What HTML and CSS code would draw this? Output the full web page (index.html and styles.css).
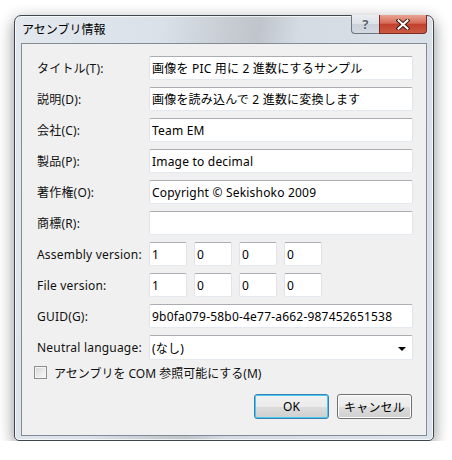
FILE: index.html
```html
<!DOCTYPE html>
<html lang="ja">
<head>
<meta charset="utf-8">
<title>アセンブリ情報</title>
<link rel="stylesheet" href="styles.css">
</head>
<body>
<div class="window">
  <div class="titlebar">
    <span class="title">アセンブリ情報</span>
    <div class="caption-btns">
      <div class="cap help">?</div>
      <div class="cap close">
        <svg width="14" height="11" viewBox="0 0 14 11">
          <path d="M2.5 1.5 L11.5 9.5 M11.5 1.5 L2.5 9.5" stroke="#3a1a14" stroke-width="4" stroke-linecap="square" fill="none"/>
          <path d="M2.5 1.5 L11.5 9.5 M11.5 1.5 L2.5 9.5" stroke="#ffffff" stroke-width="2" stroke-linecap="square" fill="none"/>
        </svg>
      </div>
    </div>
  </div>
  <div class="client">
    <div class="form">
      <div class="lbl">タイトル(T):</div>
      <div class="field">画像を PIC 用に 2 進数にするサンプル</div>
      <div class="lbl">説明(D):</div>
      <div class="field">画像を読み込んで 2 進数に変換します</div>
      <div class="lbl">会社(C):</div>
      <div class="field">Team EM</div>
      <div class="lbl">製品(P):</div>
      <div class="field">Image to decimal</div>
      <div class="lbl">著作権(O):</div>
      <div class="field">Copyright © Sekishoko 2009</div>
      <div class="lbl">商標(R):</div>
      <div class="field"></div>
      <div class="lbl">Assembly version:</div>
      <div class="versions">
        <div class="field ver">1</div>
        <div class="field ver">0</div>
        <div class="field ver">0</div>
        <div class="field ver">0</div>
      </div>
      <div class="lbl">File version:</div>
      <div class="versions">
        <div class="field ver">1</div>
        <div class="field ver">0</div>
        <div class="field ver">0</div>
        <div class="field ver">0</div>
      </div>
      <div class="lbl">GUID(G):</div>
      <div class="field">9b0fa079-58b0-4e77-a662-987452651538</div>
      <div class="lbl">Neutral language:</div>
      <div class="field combo"><span>(なし)</span><span class="arrow"></span></div>
    </div>
    <div class="check-row">
      <span class="checkbox"></span>
      <span class="check-label">アセンブリを COM 参照可能にする(M)</span>
    </div>
    <div class="buttons">
      <div class="btn ok">OK</div>
      <div class="btn">キャンセル</div>
    </div>
  </div>
</div>
</body>
</html>
```

FILE: styles.css
```css
html, body {
  margin: 0;
  padding: 0;
  background: #ffffff;
}
body {
  padding: 15px 0 0 14px;
  font-family: "Noto Sans", "Noto Sans CJK JP", sans-serif;
  font-size: 12px;
  letter-spacing: 0.2px;
  color: #111;
}
.window {
  box-sizing: border-box;
  width: 420px;
  height: 426px;
  border: 1px solid #3e4650;
  border-radius: 7px 7px 5px 5px;
  padding: 0 6px 4px 6px;
  background: linear-gradient(100deg, #e2e8ee 0%, #dbe1e8 30%, #c6ccd2 44%, #bfc5cb 50%, #d5dbe2 58%, #dde3ea 100%);
  box-shadow: 0 5px 16px rgba(0,0,0,0.45), inset 0 0 0 1px rgba(255,255,255,0.7);
  display: flex;
  flex-direction: column;
}
.titlebar {
  height: 27px;
  display: flex;
  align-items: flex-start;
  flex-shrink: 0;
}
.title {
  padding-left: 1px;
  line-height: 27px;
  font-size: 12px;
  letter-spacing: 0;
  color: #000;
}
.caption-btns {
  margin-left: auto;
  margin-top: -1px;
  display: flex;
  height: 19px;
}
.cap {
  box-sizing: border-box;
  height: 19px;
  display: flex;
  align-items: center;
  justify-content: center;
  border: 1px solid #6d7682;
  border-top: none;
}
.help {
  width: 28px;
  border-radius: 0 0 0 4px;
  border-right: none;
  background: linear-gradient(#e9edf1 0%, #dde2e8 50%, #c9d0d8 51%, #d3d9e0 100%);
  color: #5a6470;
  font-weight: bold;
  font-size: 13px;
  text-shadow: 0 0 1px #fff;
}
.close {
  width: 48px;
  border-radius: 0 0 4px 0;
  border-color: #7a2a20;
  background: linear-gradient(#e8a493 0%, #d66c58 45%, #c2402b 52%, #cc5a44 100%);
}
.close svg { display: block; }

.client {
  flex: 1;
  box-sizing: border-box;
  border: 1px solid #838c96;
  background: #f0f0f0;
  padding: 12px 13px 0 15px;
}
.form {
  display: grid;
  grid-template-columns: 112px 264px;
  grid-auto-rows: 24px;
  row-gap: 7px;
}
.lbl {
  display: flex;
  align-items: center;
  white-space: nowrap;
}
.field {
  box-sizing: border-box;
  height: 24px;
  background: #fff;
  border: 1px solid #e2e3ea;
  border-top-color: #abadb3;
  border-bottom-color: #e3e9ef;
  border-radius: 2px;
  padding: 0 2px;
  display: flex;
  align-items: center;
  white-space: nowrap;
  overflow: hidden;
  color: #000;
}
.versions {
  display: flex;
  gap: 7px;
}
.ver {
  width: 38px;
}
.combo {
  justify-content: space-between;
  height: 25px;
  padding-right: 6px;
}
.arrow {
  width: 0;
  height: 0;
  border-left: 4px solid transparent;
  border-right: 4px solid transparent;
  border-top: 4px solid #000;
  margin-top: 2px;
}
.check-row {
  margin-top: 7px;
  margin-left: -3px;
  display: flex;
  align-items: center;
  gap: 7px;
  height: 13px;
}
.check-label {
  letter-spacing: 0;
}
.checkbox {
  box-sizing: border-box;
  width: 13px;
  height: 13px;
  border: 1px solid #8e8f8f;
  background: linear-gradient(135deg, #d4d4d4 0%, #ededed 60%, #f8f8f8 100%);
  box-shadow: inset 0 0 0 1px #f4f4f4;
}
.buttons {
  margin-top: 15px;
  margin-right: 1px;
  display: flex;
  justify-content: flex-end;
  gap: 8px;
}
.btn {
  box-sizing: border-box;
  width: 75px;
  height: 25px;
  border: 1px solid #707070;
  border-radius: 3px;
  background: linear-gradient(#f2f2f2 0%, #ebebeb 50%, #dddddd 51%, #cfcfcf 100%);
  box-shadow: inset 0 0 0 1px #fcfcfc;
  display: flex;
  align-items: center;
  justify-content: center;
  color: #000;
}
.ok {
  border-color: #3c7fb1;
  box-shadow: inset 0 0 0 1px #48c9f5;
}
```
